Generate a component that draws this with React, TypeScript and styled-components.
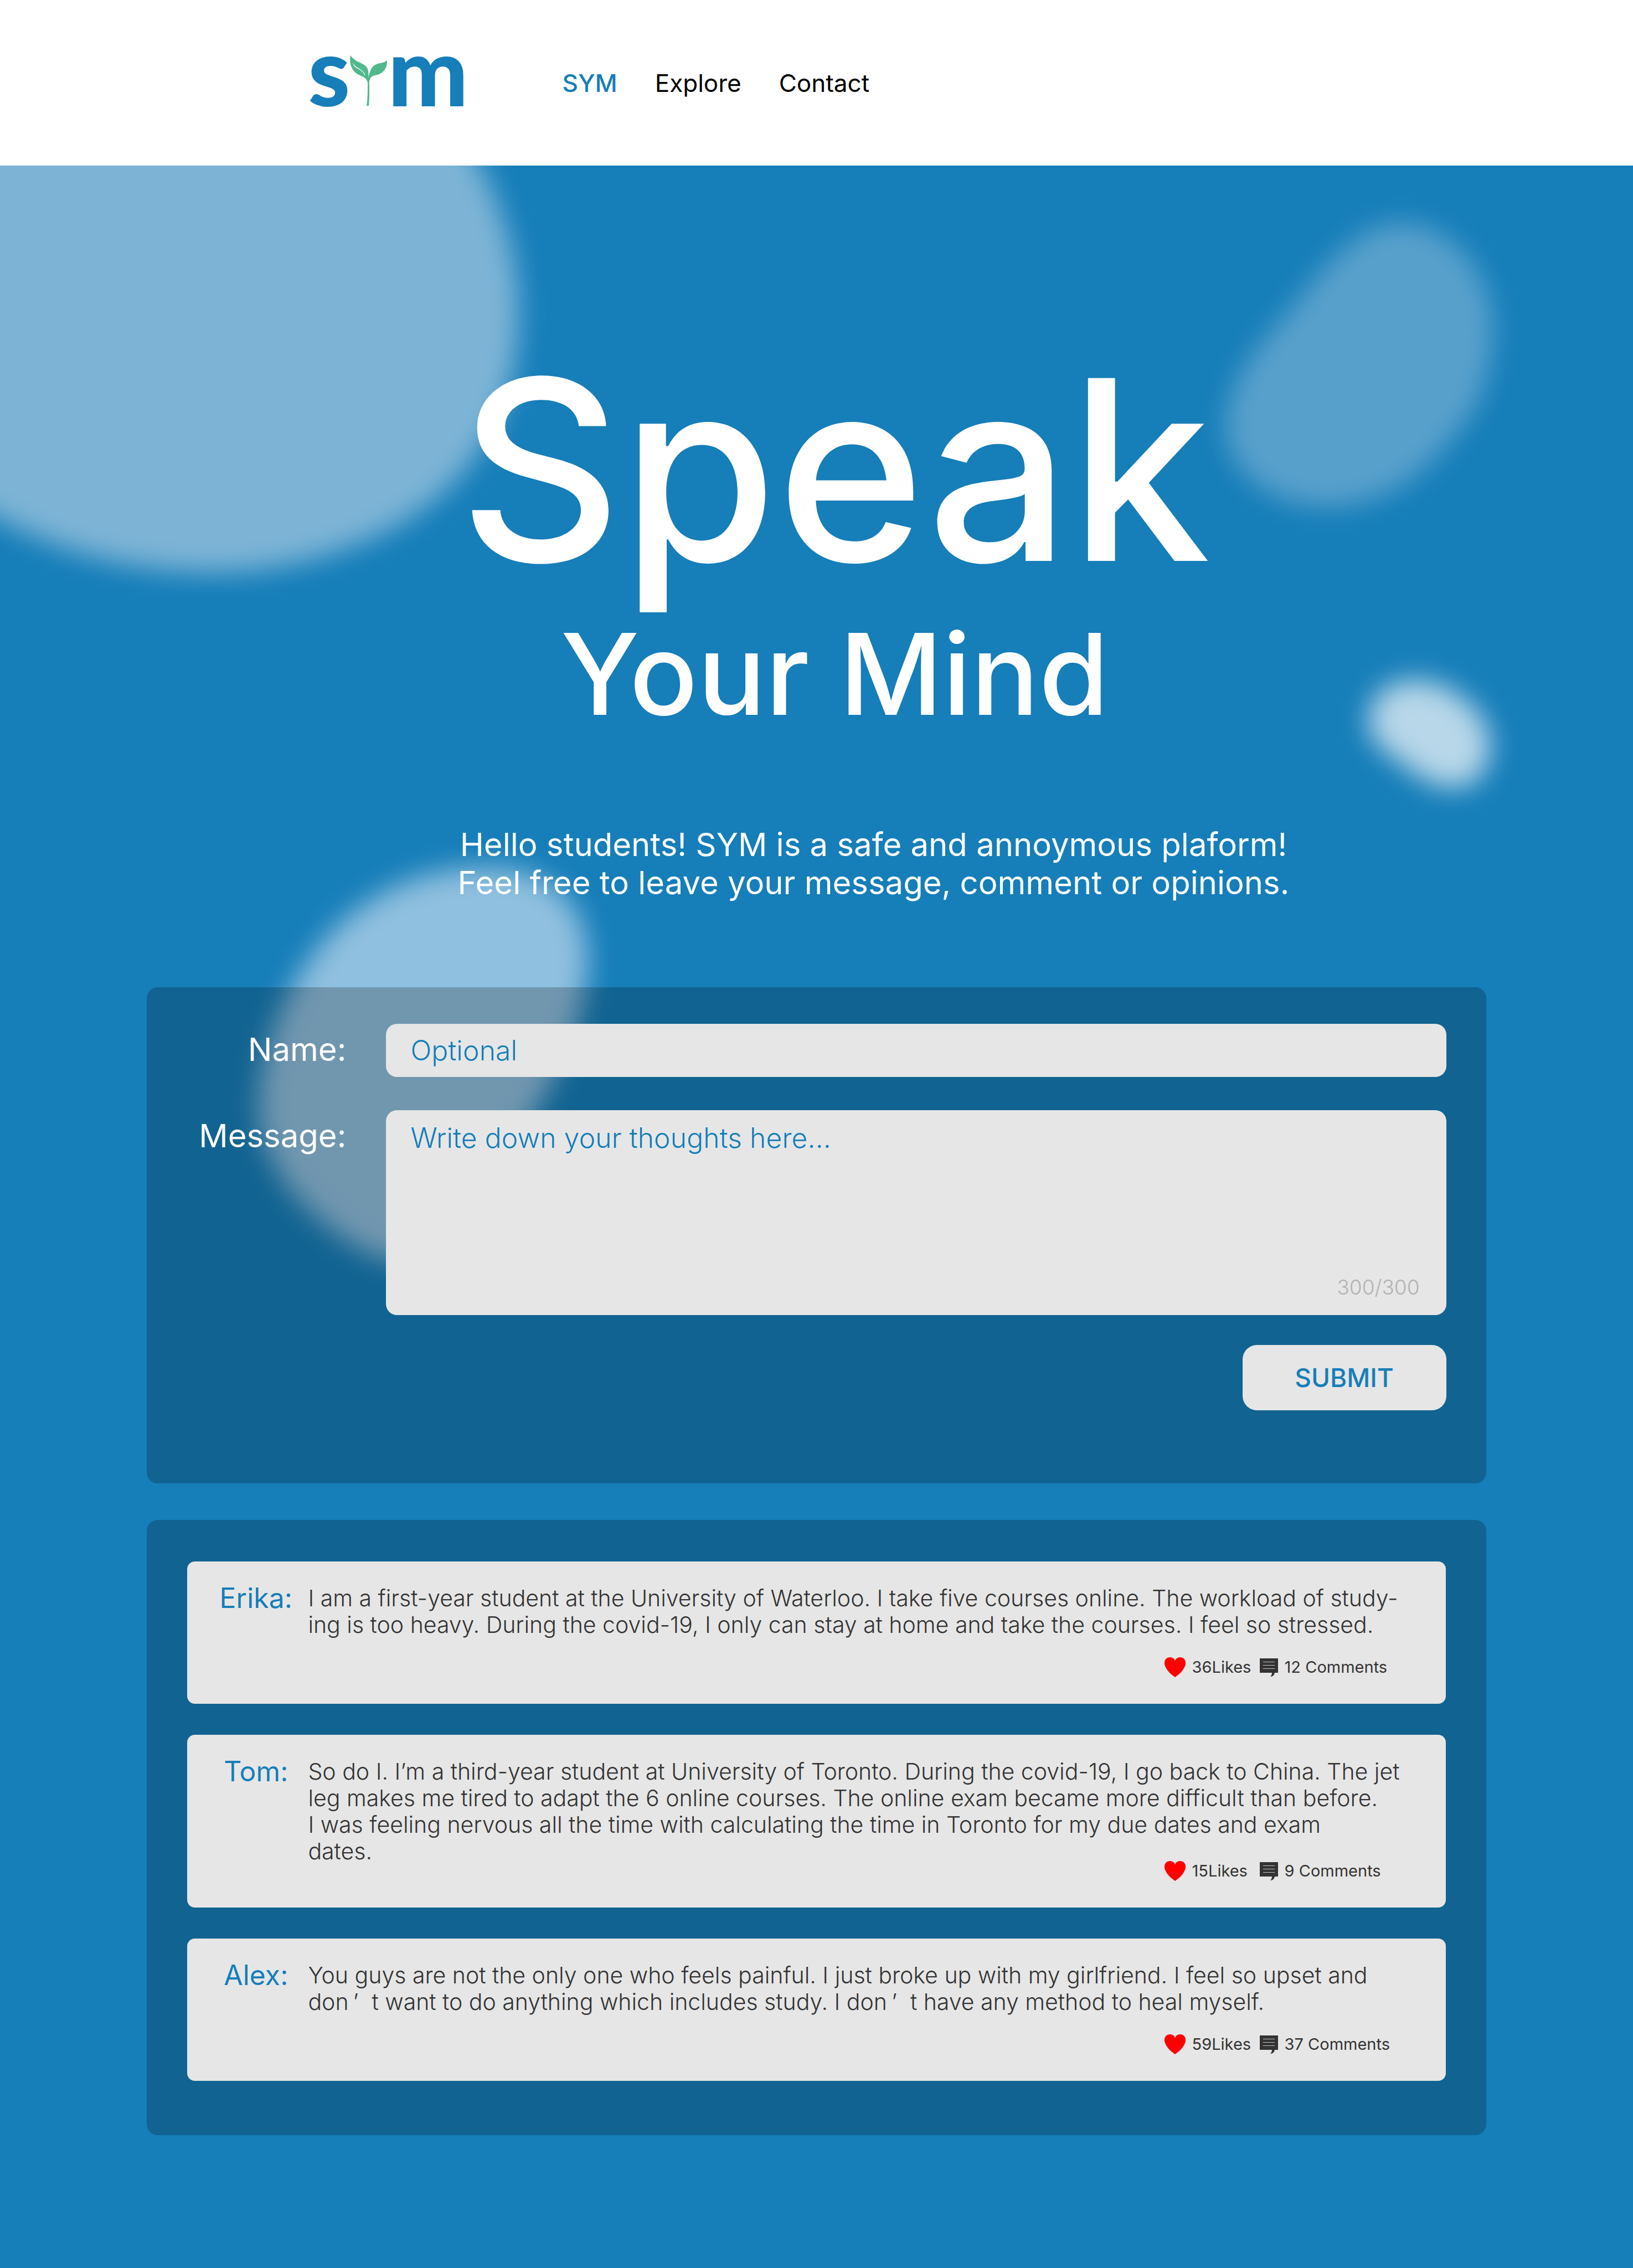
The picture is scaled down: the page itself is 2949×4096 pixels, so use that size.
import React, { useState } from "react";
import type { ReactNode } from "react";
import styled, { createGlobalStyle, css } from "styled-components";

const color = {
  brand: "#167eb9",
  leaf: "#50b88c",
  field: "#e6e6e6",
  ink: "#333333",
  muted: "#b3b3b3",
};

const sans = `Inter, Lato, "Open Sans", sans-serif`;

const GlobalStyle = createGlobalStyle`
  *, *::before, *::after { box-sizing: border-box; }
  body {
    margin: 0;
    background: ${color.brand};
    font-family: ${sans};
    -webkit-font-smoothing: antialiased;
  }
  h1, p, ul { margin: 0; padding: 0; }
  ul { list-style: none; }
  button, input, textarea { font-family: inherit; }
`;

const Header = styled.header`
  display: flex;
  align-items: center;
  gap: 170px;
  height: 299px;
  padding-left: 19%;
  background: #ffffff;
`;

const Logo = styled.a`
  display: flex;
  align-items: baseline;
  margin-left: -4px;
  padding-bottom: 48px;
  color: ${color.brand};
  font-family: Lato, sans-serif;
  font-size: 172px;
  line-height: 168px;
  font-weight: 900;
  text-decoration: none;
`;

const Sprout = styled.svg`
  width: 68px;
  height: 92px;
`;

const Nav = styled.nav`
  display: flex;
  gap: 68px;
`;

const NavLink = styled.a<{ $active?: boolean }>`
  font-size: 44px;
  line-height: 60px;
  font-weight: ${(p) => (p.$active ? 500 : 400)};
  color: ${(p) => (p.$active ? color.brand : "#000000")};
  text-decoration: none;
`;

const Main = styled.main`
  position: relative;
  overflow: hidden;
  padding-bottom: 240px;
  background: ${color.brand};
`;

const Backdrop = styled.svg`
  position: absolute;
  top: 0;
  left: 0;
  width: 100%;
  height: auto;
`;

const Content = styled.div`
  position: relative;
  width: 82%;
  margin: 0 auto;
  padding-top: 324px;
`;

const Title = styled.h1`
  display: flex;
  flex-direction: column;
  gap: 40px;
  padding-left: 66px;
  color: #ffffff;
  font-weight: 500;
  text-align: center;
`;

const TitleLead = styled.span`
  font-size: 454px;
  line-height: 450px;
`;

const TitleRest = styled.span`
  font-size: 204px;
  line-height: 208px;
`;

const Intro = styled.p`
  margin: 170px 0 154px;
  padding-left: 206px;
  color: #ffffff;
  font-size: 58px;
  line-height: 69px;
  font-weight: 400;
  text-align: center;
`;

const panel = css`
  border-radius: 20px;
  background: rgba(0, 0, 0, 0.21);
`;

const Form = styled.form`
  ${panel}
  display: grid;
  grid-template-columns: 360px 1fr;
  column-gap: 72px;
  padding: 66px 72px 132px 0;
`;

const Label = styled.label`
  color: #ffffff;
  font-size: 58px;
  line-height: 92px;
  text-align: right;
`;

const fieldText = css`
  display: block;
  width: 100%;
  border: 0;
  border-radius: 20px;
  background: ${color.field};
  color: ${color.brand};
  font-size: 50px;
  font-weight: 300;
  &::placeholder {
    color: ${color.brand};
    opacity: 1;
  }
`;

const NameInput = styled.input`
  ${fieldText}
  height: 96px;
  margin-bottom: 60px;
  padding: 0 44px;
`;

const MessageBox = styled.div`
  position: relative;
  margin-bottom: 54px;
`;

const MessageInput = styled.textarea`
  ${fieldText}
  height: 370px;
  padding: 20px 44px;
  line-height: 60px;
  resize: none;
`;

const Counter = styled.span`
  position: absolute;
  right: 48px;
  bottom: 30px;
  color: ${color.muted};
  font-size: 37px;
  line-height: 40px;
  font-weight: 300;
`;

const Submit = styled.button`
  grid-column: 2;
  justify-self: end;
  width: 368px;
  height: 118px;
  border: 0;
  border-radius: 26px;
  background: ${color.field};
  color: ${color.brand};
  font-size: 46px;
  font-weight: 500;
`;

const Posts = styled.ul`
  ${panel}
  display: flex;
  flex-direction: column;
  gap: 56px;
  margin-top: 66px;
  padding: 75px 73px 98px;
`;

const Card = styled.li`
  padding: 42px 0 48px 50px;
  border-radius: 14px;
  background: ${color.field};
`;

const CardBody = styled.div`
  display: grid;
  grid-template-columns: 148px 1fr;
  column-gap: 20px;
`;

const Author = styled.span`
  color: ${color.brand};
  font-size: 50px;
  line-height: 48px;
  text-align: center;
  white-space: nowrap;
`;

const Message = styled.p`
  color: ${color.ink};
  font-size: 41px;
  line-height: 48px;
  font-weight: 300;
  white-space: pre-line;
`;

const WideQuote = styled.span`
  margin: 0 24px 0 8px;
`;

const Meta = styled.div<{ $tight?: boolean }>`
  display: grid;
  grid-template-columns: 172px 1fr;
  width: 508px;
  margin-top: ${(p) => (p.$tight ? "-6px" : "35px")};
  margin-left: auto;
`;

const MetaButton = styled.button`
  display: flex;
  align-items: center;
  gap: 12px;
  height: 36px;
  padding: 0;
  border: 0;
  background: none;
  color: ${color.ink};
  font-size: 29px;
  line-height: 36px;
  white-space: nowrap;
`;

const HeartIcon = styled.svg`
  flex: none;
  width: 38px;
  height: 36px;
`;

const CommentIcon = styled.svg`
  flex: none;
  width: 33px;
  height: 34px;
`;

type Post = {
  author: string;
  text: ReactNode;
  likes: number;
  comments: number;
  tight?: boolean;
};

const posts: Post[] = [
  {
    author: "Erika",
    text:
      "I am a first-year student at the University of Waterloo. I take five courses online. The workload of study-\n" +
      "ing is too heavy. During the covid-19, I only can stay at home and take the courses. I feel so stressed.",
    likes: 36,
    comments: 12,
  },
  {
    author: "Tom",
    text:
      "So do I. I’m a third-year student at University of Toronto. During the covid-19, I go back to China. The jet\n" +
      "leg makes me tired to adapt the 6 online courses. The online exam became more difficult than before.\n" +
      "I was feeling nervous all the time with calculating the time in Toronto for my due dates and exam\n" +
      "dates.",
    likes: 15,
    comments: 9,
    tight: true,
  },
  {
    author: "Alex",
    text: (
      <>
        {"You guys are not the only one who feels painful. I just broke up with my girlfriend. I feel so upset and\ndon"}
        <WideQuote>’</WideQuote>
        {"t want to do anything which includes study. I don"}
        <WideQuote>’</WideQuote>
        {"t have any method to heal myself."}
      </>
    ),
    likes: 59,
    comments: 37,
  },
];

function Heart() {
  return (
    <HeartIcon viewBox="0 0 38 36" aria-hidden="true">
      <path
        d="M19 36C15 33 9 29 5 23C1 17 0 14 0 10C0 4 4 0 10 0C14 0 18 2 19 7C20 2 24 0 28 0C34 0 38 4 38 10C38 14 37 17 33 23C29 29 23 33 19 36Z"
        fill="#ff0000"
      />
    </HeartIcon>
  );
}

function Comment() {
  return (
    <CommentIcon viewBox="0 0 33 34" aria-hidden="true">
      <path d="M0 1H33V27H27C26 31 24 34 19 34C21 32 22 30 22 27H0Z" fill={color.ink} />
      <path d="M6 7.5H27M6 13.5H27M6 19.5H27" stroke="#c4c4c4" strokeWidth="1" />
    </CommentIcon>
  );
}

function Blobs() {
  return (
    <Backdrop viewBox="0 0 2949 2200" aria-hidden="true">
      <defs>
        <filter id="soft" x="-30%" y="-30%" width="160%" height="160%">
          <feGaussianBlur stdDeviation="25" />
        </filter>
      </defs>
      <g filter="url(#soft)" transform="translate(0 -299)">
        <path
          d="M-200 100H740C860 260 942 410 937 580C932 750 850 870 720 948C600 1012 480 1036 370 1034C220 1030 100 992 0 938L-200 840Z"
          fill="#7db4d6"
        />
        <path
          d="M2533 402C2625 406 2702 500 2696 606C2690 680 2676 730 2636 774C2576 856 2498 915 2398 915C2294 915 2212 848 2214 767C2218 690 2266 630 2322 570C2362 520 2388 484 2428 449C2462 420 2492 402 2533 402Z"
          fill="#58a0cc"
        />
        <path
          d="M2558 1228C2600 1230 2630 1248 2655 1272C2680 1296 2693 1322 2691 1352C2689 1392 2664 1422 2625 1423C2588 1422 2562 1402 2530 1378C2494 1350 2471 1336 2471 1302C2473 1258 2506 1226 2558 1228Z"
          fill="#b8d7e9"
        />
        <path
          d="M888 1566C986 1568 1066 1628 1061 1742C1057 1810 1036 1880 1000 1945C966 2010 926 2080 876 2146C828 2222 780 2280 706 2278C646 2262 568 2204 518 2140C480 2080 464 2040 468 1985C472 1920 490 1860 526 1787C556 1734 576 1706 610 1672C694 1594 792 1564 888 1566Z"
          fill="#90c0df"
        />
      </g>
    </Backdrop>
  );
}

export default function App() {
  const [name, setName] = useState("");
  const [message, setMessage] = useState("");

  return (
    <>
      <GlobalStyle />
      <Header>
        <Logo href="#" aria-label="SYM">
          <span>s</span>
          <Sprout viewBox="0 0 68 92" aria-hidden="true">
            <path
              d="M1 0C8 11 19 12 27 18C33 23 34 29 33 40C35 33 37 23 44 18C51 13 60 15 67 9C67 18 65 25 59 30C52 36 45 35 40 38C36 41 34 46 35 56C35 68 35 80 34 91H30C32 80 32 64 32 50C31 42 25 39 18 36C4 30-2 17 1 0Z"
              fill={color.leaf}
            />
            <path d="M5 13C9 21 15 22 21 27C26 31 28 34 27 37C25 31 21 28 16 25C10 22 6 19 5 13Z" fill="#ffffff" />
          </Sprout>
          <span>m</span>
        </Logo>
        <Nav aria-label="Main">
          <NavLink href="#sym" $active>
            SYM
          </NavLink>
          <NavLink href="#explore">Explore</NavLink>
          <NavLink href="#contact">Contact</NavLink>
        </Nav>
      </Header>
      <Main>
        <Blobs />
        <Content>
          <Title>
            <TitleLead>Speak</TitleLead>
            <TitleRest>Your Mind</TitleRest>
          </Title>
          <Intro>
            Hello students! SYM is a safe and annoymous plaform!
            <br />
            Feel free to leave your message, comment or opinions.
          </Intro>
          <Form onSubmit={(e) => e.preventDefault()}>
            <Label htmlFor="name">Name:</Label>
            <NameInput
              id="name"
              placeholder="Optional"
              value={name}
              onChange={(e) => setName(e.target.value)}
            />
            <Label htmlFor="message">Message:</Label>
            <MessageBox>
              <MessageInput
                id="message"
                maxLength={300}
                placeholder="Write down your thoughts here..."
                value={message}
                onChange={(e) => setMessage(e.target.value)}
              />
              <Counter>{300 - message.length}/300</Counter>
            </MessageBox>
            <Submit type="submit">SUBMIT</Submit>
          </Form>
          <Posts>
            {posts.map((post) => (
              <Card key={post.author}>
                <CardBody>
                  <Author>{post.author}:</Author>
                  <Message>{post.text}</Message>
                </CardBody>
                <Meta $tight={post.tight}>
                  <MetaButton type="button">
                    <Heart />
                    <span>{post.likes}Likes</span>
                  </MetaButton>
                  <MetaButton type="button">
                    <Comment />
                    <span>{post.comments} Comments</span>
                  </MetaButton>
                </Meta>
              </Card>
            ))}
          </Posts>
        </Content>
      </Main>
    </>
  );
}
